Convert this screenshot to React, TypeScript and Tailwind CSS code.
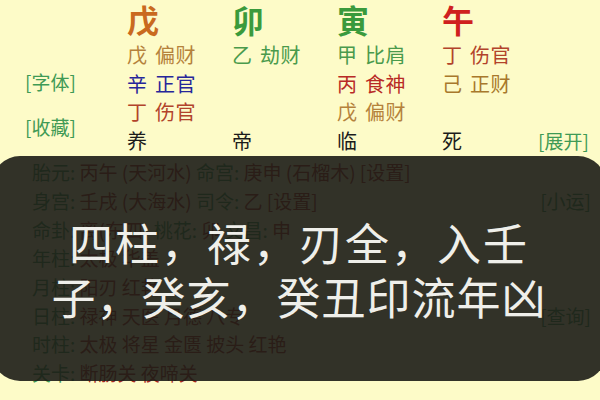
const font = { fontFamily: '"Noto Sans CJK SC", "Noto Sans", sans-serif' };

type Cell = { stem: string; god: string; color: string } | null;

const pillars: { big: string; bigColor: string; hidden: Cell[]; stage: string }[] = [
  {
    big: "戊",
    bigColor: "text-[#c96a1f]",
    hidden: [
      { stem: "戊", god: "偏财", color: "text-[#b5823c]" },
      { stem: "辛", god: "正官", color: "text-[#26269a]" },
      { stem: "丁", god: "伤官", color: "text-[#b2432b]" },
    ],
    stage: "养",
  },
  {
    big: "卯",
    bigColor: "text-[#3a9a3c]",
    hidden: [{ stem: "乙", god: "劫财", color: "text-[#4a9a4c]" }, null, null],
    stage: "帝",
  },
  {
    big: "寅",
    bigColor: "text-[#3a9a3c]",
    hidden: [
      { stem: "甲", god: "比肩", color: "text-[#4a9a4c]" },
      { stem: "丙", god: "食神", color: "text-[#b82a26]" },
      { stem: "戊", god: "偏财", color: "text-[#b5823c]" },
    ],
    stage: "临",
  },
  {
    big: "午",
    bigColor: "text-[#cf201e]",
    hidden: [
      { stem: "丁", god: "伤官", color: "text-[#b2432b]" },
      { stem: "己", god: "正财", color: "text-[#a8782c]" },
      null,
    ],
    stage: "死",
  },
];

const G = "text-[#3f9a55]";
const R = "text-[#a8281f]";

type Part = [string, string];

const lines: { parts: Part[]; right?: string }[] = [
  {
    parts: [
      ["胎元: ", G],
      ["丙午 (天河水) ", R],
      ["命宫: ", G],
      ["庚申 (石榴木) ", R],
      ["[设置]", R],
    ],
  },
  {
    parts: [
      ["身宫: ", G],
      ["壬戌 (大海水) ", R],
      ["司令: ", G],
      ["乙 ", R],
      ["[设置]", R],
    ],
    right: "[小运]",
  },
  {
    parts: [
      ["命卦: ", G],
      ["离(东四) ", R],
      ["桃花: ", G],
      ["卯 ", R],
      ["文昌: ", G],
      ["申", R],
    ],
  },
  { parts: [["年柱: ", G], ["太极 华盖", R]] },
  { parts: [["月柱: ", G], ["阳刃 红艳", R]] },
  { parts: [["日柱: ", G], ["禄神 天医 月德 八专", R]], right: "[查询]" },
  { parts: [["时柱: ", G], ["太极 将星 金匮 披头 红艳", R]] },
  { parts: [["关卡: ", G], ["断肠关 夜啼关", R]] },
];

export default function App() {
  return (
    <div className="relative w-[600px] h-[400px] overflow-hidden bg-[#fdfbc8]" style={font}>
      {/* top chart */}
      <div className="flex pl-[25px]">
        <div className="w-[102px] flex flex-col">
          <div className={`mt-[70px] text-[19px] leading-[24px] ${G}`}>[字体]</div>
          <div className={`mt-[21px] text-[19px] leading-[24px] ${G}`}>[收藏]</div>
        </div>
        <div className="grid grid-cols-[105px_105px_105px_96px]">
          {pillars.map((p) => (
            <div key={p.big + p.stage} className="flex flex-col">
              <div className={`h-[41px] pt-[1px] text-[32px] leading-[36px] font-bold ${p.bigColor}`}>{p.big}</div>
              {p.hidden.map((h, i) => (
                <div key={i} className={`h-[28.5px] flex text-[20px] leading-[28.5px] ${h ? h.color : ""}`}>
                  {h ? (
                    <>
                      <span>{h.stem}</span>
                      <span className="ml-[8px] tracking-[0.5px]">{h.god}</span>
                    </>
                  ) : null}
                </div>
              ))}
              <div className="h-[28.5px] text-[20px] leading-[28.5px] text-[#1b1b1b]">{p.stage}</div>
            </div>
          ))}
        </div>
        <div className="flex flex-col justify-end">
          <div className={`h-[28.5px] text-[19px] leading-[28.5px] ${G}`}>[展开]</div>
        </div>
      </div>

      {/* detail lines */}
      <div className="mt-[3px] pl-[32px] pr-[9px] flex flex-col">
        {lines.map((l, i) => (
          <div key={i} className="h-[28.7px] flex items-center justify-between text-[19px] leading-[28px]">
            <div className="whitespace-pre">
              {l.parts.map(([t, c], j) => (
                <span key={j} className={c}>
                  {t}
                </span>
              ))}
            </div>
            {l.right ? <div className={G}>{l.right}</div> : null}
          </div>
        ))}
      </div>

      {/* caption overlay */}
      <div className="absolute left-[-8px] top-[156px] w-[614px] h-[225px] rounded-[28px] bg-[rgba(28,28,22,0.9)] flex flex-col items-center justify-center">
        <div className="text-[44px] leading-[54px] tracking-[2px] text-[#efefea]">四柱，禄，刃全，入壬</div>
        <div className="text-[44px] leading-[54px] tracking-[1px] text-[#efefea]">子，癸亥，癸丑印流年凶</div>
      </div>
    </div>
  );
}
